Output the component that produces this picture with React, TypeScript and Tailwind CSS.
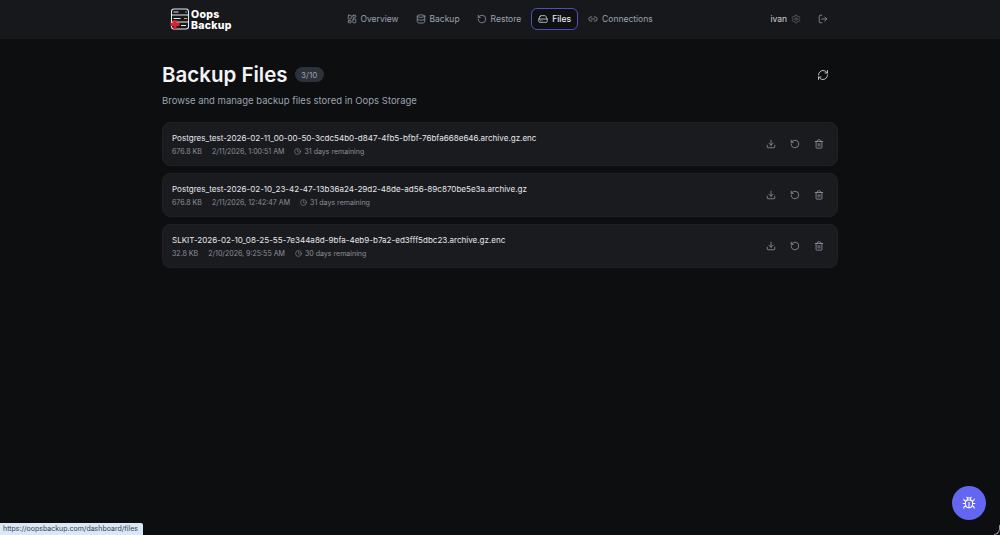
import { LayoutDashboard, Database, RotateCcw, HardDrive, Link2, Settings, LogOut, RefreshCw, Download, Trash2, Clock, Bug } from "lucide-react";

const nav = [
  { label: "Overview", icon: LayoutDashboard },
  { label: "Backup", icon: Database },
  { label: "Restore", icon: RotateCcw },
  { label: "Files", icon: HardDrive, active: true },
  { label: "Connections", icon: Link2 },
];

const files = [
  { name: "Postgres_test-2026-02-11_00-00-50-3cdc54b0-d847-4fb5-bfbf-76bfa668e646.archive.gz.enc", size: "676.8 KB", date: "2/11/2026, 1:00:51 AM", left: "31 days remaining" },
  { name: "Postgres_test-2026-02-10_23-42-47-13b36a24-29d2-48de-ad56-89c870be5e3a.archive.gz", size: "676.8 KB", date: "2/11/2026, 12:42:47 AM", left: "31 days remaining" },
  { name: "SLKIT-2026-02-10_08-25-55-7e344a8d-9bfa-4eb9-b7a2-ed3fff5dbc23.archive.gz.enc", size: "32.8 KB", date: "2/10/2026, 9:25:55 AM", left: "30 days remaining" },
];

function Logo() {
  return (
    <svg width="20" height="22" viewBox="0 0 20 22" fill="none">
      <rect x="1.5" y="1" width="17" height="20" rx="2.5" stroke="#e5e7eb" strokeWidth="1.1" />
      <path d="M1.5 7h17M1.5 14h17" stroke="#e5e7eb" strokeWidth="1.1" />
      <path d="M3.5 4h5M3.5 10.5h7M11 17.5h5" stroke="#e5e7eb" strokeWidth="1" />
      <path d="M15 4h2" stroke="#22c55e" strokeWidth="1" />
      <path d="M14 10.5h3" stroke="#eab308" strokeWidth="1" />
      <path d="M0.5 15h3v-3h3v3h3v3h-3v3h-3v-3h-3z" fill="#e11d2e" />
    </svg>
  );
}

export default function App() {
  return (
    <div className="relative h-[535px] w-[1000px] overflow-hidden bg-[#0d0e10] font-['Inter',sans-serif]">
      <header className="flex h-[39px] items-center border-b border-[#1a1b1f] bg-[#17181c] pl-[170px] pr-[172px]">
        <div className="flex w-[169.5px] items-center gap-[1px]">
          <Logo />
          <div className="pt-[2px] text-[10.5px] font-extrabold leading-[11px] tracking-[0.3px] text-white">
            <div>Oops</div>
            <div>Backup</div>
          </div>
        </div>
        <nav className="flex items-center gap-[3px]">
          {nav.map(({ label, icon: Icon, active }) => (
            <div
              key={label}
              className={
                active
                  ? "flex h-[22px] items-center gap-[4px] rounded-[6px] border border-[#4f4fb8] bg-[#0f1013] px-[6px] text-[8.5px] font-medium text-[#e5e7eb]"
                  : "flex h-[22px] items-center gap-[4px] px-[7px] text-[8.5px] text-[#9ca3af]"
              }
            >
              <Icon size={10} strokeWidth={1.75} />
              <span>{label}</span>
            </div>
          ))}
        </nav>
        <div className="ml-auto flex items-center">
          <span className="text-[8.5px] text-[#d1d5db]">ivan</span>
          <Settings size={10} strokeWidth={1.5} className="ml-[4px] text-[#6b7280]" />
          <LogOut size={10} strokeWidth={1.75} className="ml-[17px] text-[#9ca3af]" />
        </div>
      </header>

      <main className="mx-auto w-[676px] pt-[25px]">
        <div className="flex h-[21px] items-center">
          <h1 className="pt-px text-[20.5px] font-semibold leading-none text-[#f3f4f6]">Backup Files</h1>
          <span className="ml-[7px] flex h-[15px] items-center rounded-full bg-[#2d3138] px-[6.5px] text-[8px] text-[#9ca3af]">3/10</span>
          <RefreshCw size={12} strokeWidth={1.75} className="ml-auto mr-[9px] text-[#d1d5db]" />
        </div>
        <p className="mt-[9px] text-[9.5px] leading-[14px] text-[#9ca3af]">Browse and manage backup files stored in Oops Storage</p>

        <div className="mt-[14px] flex flex-col gap-[7px]">
          {files.map((f) => (
            <div key={f.name} className="flex h-[44px] items-center justify-between rounded-[8px] border border-[#1f2025] bg-[#1a1b1f] pl-[9px] pr-[13px]">
              <div>
                <div className="text-[8.05px] leading-[12px] text-[#e5e7eb]">{f.name}</div>
                <div className="mt-[2px] flex items-center text-[7.05px] leading-[11px] text-[#8b9099]">
                  <span>{f.size}</span>
                  <span className="ml-[10px]">{f.date}</span>
                  <Clock size={7} strokeWidth={2} className="ml-[10px]" />
                  <span className="ml-[3px]">{f.left}</span>
                </div>
              </div>
              <div className="flex items-center gap-[14px] text-[#9ca3af]">
                <Download size={10} strokeWidth={1.75} />
                <RotateCcw size={10} strokeWidth={1.75} />
                <Trash2 size={10} strokeWidth={1.75} />
              </div>
            </div>
          ))}
        </div>
      </main>

      <div className="absolute bottom-[15px] right-[14px] flex h-[34px] w-[34px] items-center justify-center rounded-full bg-[#6366f1] text-white">
        <Bug size={14} strokeWidth={1.75} />
      </div>
      <div className="absolute bottom-0 left-0 flex h-[12px] w-[143px] items-center rounded-tr-[2px] bg-[#dbe7f5] pl-[3px] text-[7px] text-[#374151]">
        https://oopsbackup.com/dashboard/files
      </div>
      <div className="absolute bottom-0 right-0 h-[10px] w-[6px] rounded-br-[8px] border-b border-r border-[#8f9298]" />
    </div>
  );
}
